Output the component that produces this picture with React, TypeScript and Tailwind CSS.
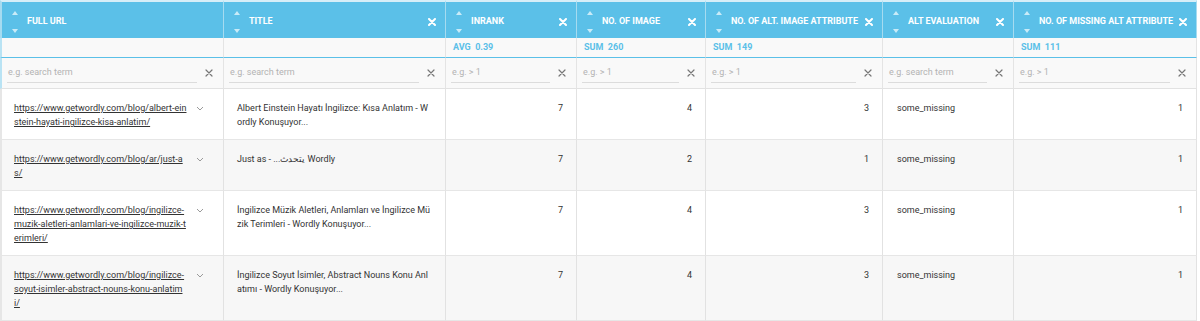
import React from "react";

const COLS = [
  { key: "url", label: "FULL URL", close: false, summary: "" },
  { key: "title", label: "TITLE", close: true, summary: "" },
  { key: "inrank", label: "INRANK", close: true, summary: "AVG  0.39" },
  { key: "img", label: "NO. OF IMAGE", close: true, summary: "SUM  260" },
  { key: "alt", label: "NO. OF ALT. IMAGE ATTRIBUTE", close: true, summary: "SUM  149" },
  { key: "evalu", label: "ALT EVALUATION", close: true, summary: "" },
  { key: "missing", label: "NO. OF MISSING ALT ATTRIBUTE", close: true, summary: "SUM  111" },
];

const PLACEHOLDERS = ["e.g. search term", "e.g. search term", "e.g. > 1", "e.g. > 1", "e.g. > 1", "e.g. search term", "e.g. > 1"];

const ROWS = [
  {
    url: "https://www.getwordly.com/blog/albert-einstein-hayati-ingilizce-kisa-anlatim/",
    title: "Albert Einstein Hayatı İngilizce: Kısa Anlatım - Wordly Konuşuyor...",
    inrank: 7, img: 4, alt: 3, evalu: "some_missing", missing: 1,
  },
  {
    url: "https://www.getwordly.com/blog/ar/just-as/",
    title: "Just as - ...يتحدث Wordly",
    inrank: 7, img: 2, alt: 1, evalu: "some_missing", missing: 1,
  },
  {
    url: "https://www.getwordly.com/blog/ingilizce-muzik-aletleri-anlamlari-ve-ingilizce-muzik-terimleri/",
    title: "İngilizce Müzik Aletleri, Anlamları ve İngilizce Müzik Terimleri - Wordly Konuşuyor...",
    inrank: 7, img: 4, alt: 3, evalu: "some_missing", missing: 1,
  },
  {
    url: "https://www.getwordly.com/blog/ingilizce-soyut-isimler-abstract-nouns-konu-anlatimi/",
    title: "İngilizce Soyut İsimler, Abstract Nouns Konu Anlatımı - Wordly Konuşuyor...",
    inrank: 7, img: 4, alt: 3, evalu: "some_missing", missing: 1,
  },
];

const CloseIcon = ({ className = "", w = 1.2 }: { className?: string; w?: number }) => (
  <svg width="8" height="8" viewBox="0 0 8 8" className={className}>
    <path d="M1 1L7 7M7 1L1 7" stroke="currentColor" strokeWidth={w} strokeLinecap="round" />
  </svg>
);

export default function App() {
  return (
    <div className="w-[1200px] h-[321px] overflow-hidden bg-white font-['Roboto',sans-serif]">
      <div className="grid grid-cols-[224px_222px_131px_129px_177px_131px_183px] w-[1197px]">
        {/* Header */}
        {COLS.map((c, i) => (
          <div key={c.key}
            className={`h-[38px] bg-[#5bc0e8] border-t-2 border-t-[#d6eef8] border-r border-r-[#a6dbf0] flex items-center pt-[3px] pl-[10px] pr-[9px] ${i === 0 ? "border-l-2 border-l-[#a6dbf0]" : ""}`}>
            <div className="flex flex-col justify-between h-[22px] w-[7px] shrink-0">
              <div className="w-0 h-0 border-x-[3.5px] border-x-transparent border-b-[4px] border-b-[#c9ebf8]" />
              <div className="w-0 h-0 border-x-[3.5px] border-x-transparent border-t-[4px] border-t-[#c9ebf8]" />
            </div>
            <span className="ml-[8px] text-[9px] font-bold text-white whitespace-nowrap flex-1">{c.label}</span>
            {c.close && <CloseIcon className="text-white shrink-0" w={2} />}
          </div>
        ))}

        {/* Summary row */}
        {COLS.map((c, i) => (
          <div key={c.key}
            className={`h-[20px] bg-[#f9f9f9] border-b border-b-[#5bc0e8] border-r border-r-[#e4e4e4] flex items-center pt-[1px] pl-[7px] text-[9px] font-bold text-[#5bc0e8] whitespace-pre ${i === 0 ? "border-l-2 border-l-[#b9e3f4]" : ""}`}>
            {c.summary}
          </div>
        ))}

        {/* Filter row */}
        {COLS.map((c, i) => (
          <div key={c.key}
            className={`h-[31px] bg-[#f9f9f9] border-b border-b-[#e2e2e2] border-r border-r-[#e4e4e4] flex items-start pt-[5px] pl-[5px] pr-[10px] ${i === 0 ? "border-l-2 border-l-[#b9e3f4]" : ""}`}>
            <div className="flex-1 h-[20px] border-b border-b-[#dcdcdc] flex items-center pl-[1px] text-[9px] text-[#b3b3b3]">
              {PLACEHOLDERS[i]}
            </div>
            <CloseIcon className="text-[#777] ml-[8px] mt-[6px] shrink-0" />
          </div>
        ))}

        {/* Body rows */}
        {ROWS.map((r, ri) => {
          const bg = ri % 2 === 1 ? "bg-[#f7f7f7]" : "bg-white";
          const cell = `${bg} border-b border-b-[#e6e6e6] border-r border-r-[#e2e2e2] pt-[12px] pb-[10px] text-[9px] leading-[14px] text-[#333]`;
          return (
            <React.Fragment key={ri}>
              <div className={`${cell} border-l-2 border-l-[#e6e6e6] flex items-start pl-[12px]`}>
                <a className="w-[173px] break-all underline text-[#333]">{r.url}</a>
                <svg width="8" height="5" viewBox="0 0 8 5" className="ml-[9px] mt-[5px] shrink-0">
                  <path d="M1 1L4 4L7 1" stroke="#9a9a9a" strokeWidth="1" fill="none" />
                </svg>
              </div>
              <div className={`${cell} pl-[13px] pr-[13px] break-all`}>{r.title}</div>
              <div className={`${cell} pr-[13px] text-right`}>{r.inrank}</div>
              <div className={`${cell} pr-[13px] text-right`}>{r.img}</div>
              <div className={`${cell} pr-[13px] text-right`}>{r.alt}</div>
              <div className={`${cell} pl-[14px]`}>{r.evalu}</div>
              <div className={`${cell} pr-[13px] text-right`}>{r.missing}</div>
            </React.Fragment>
          );
        })}
      </div>
    </div>
  );
}
